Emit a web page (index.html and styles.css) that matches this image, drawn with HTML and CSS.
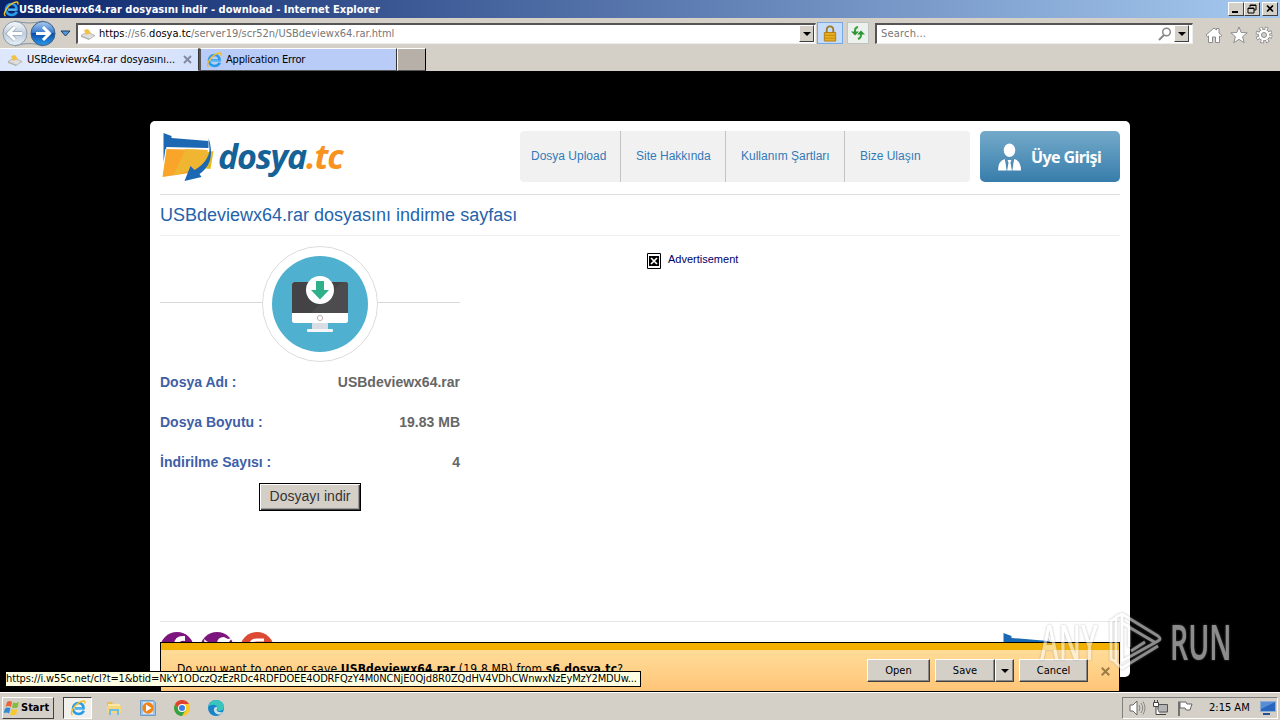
FILE: index.html
```html
<!DOCTYPE html>
<html lang="tr">
<head>
    <meta charset="UTF-8">
    <meta name="viewport" content="width=device-width, initial-scale=1.0">
    <title>USBdeviewx64.rar dosyasını indir - download</title>
    <link rel="stylesheet" href="styles.css">
</head>
<body>
    <!-- shared icons -->
    <svg class="defs" width="0" height="0">
        <symbol id="ie" viewBox="0 0 16 16">
            <path d="M13.800 10.800C12.800 13 10.800 14 8.500 14 5.200 14 3 11.700 3 8.500S5.300 3 8.500 3c3.300 0 5.300 2.200 5 5.500H5" fill="none" stroke="#2a9be8" stroke-width="2.600"/>
            <path d="M5 9h8.500" stroke="#7fd0f7" stroke-width="1"/>
            <path d="M2.500 15C-.8 13.500 4 4.500 11 1.600c3.500-1.400 4.500-.4 3.700 2" fill="none" stroke="#f3bd24" stroke-width="1.400"/>
        </symbol>
        <symbol id="drive" viewBox="0 0 16 14">
            <path d="M1 8.500 7 5l8 3.500-6 4z" fill="#dedede" stroke="#a5a5a5" stroke-width=".7"/>
            <path d="m4 3 4-1 3 4-5 2z" fill="#f2c14a"/>
            <path d="m1 8.500 8 3v1.500l-8-3z" fill="#b5b5b5"/>
        </symbol>
        <symbol id="folder" viewBox="0 0 52 50">
            <path d="M2 1l8 3v2l37 3v7l-43 1-2 13z" fill="#1c68b3"/>
            <path d="M5 15l41 1v3H4z" fill="#fff"/>
            <path d="m46 20 6-1-3 18-9-1z" fill="#e5b91e"/>
            <path d="M5 17l41 1c0 10-6 18-18 23L1 45z" fill="#f8a52a"/>
            <path d="M24 17l22 1c0 9-6 17-15 20L12 43z" fill="#f0b632"/>
            <path d="M47 6c5 15 3 28-9 36l2 3-17 4 6-15 4 4c9-5 15-13 15-21z" fill="#1c68b3"/>
        </symbol>
    </svg>

    <div class="titlebar">
        <svg class="titlebar__icon"><use href="#ie"/></svg>
        <span class="titlebar__text">USBdeviewx64.rar dosyasını indir - download - Internet Explorer</span>
        <div class="window-buttons">
            <span><svg viewBox="0 0 14 12"><path d="M3 9h6" stroke="#000" stroke-width="2"/></svg></span>
            <span><svg viewBox="0 0 14 12"><path d="M5 4V2h6v5H9M5 2.500h6M3 5h6v5H3zM3 5.500h6" fill="none" stroke="#000"/></svg></span>
            <span class="window-buttons__close"><svg viewBox="0 0 14 12"><path d="m4 2.500 6 6m0-6-6 6" stroke="#000" stroke-width="1.700"/></svg></span>
        </div>
    </div>

    <div class="toolbar">
        <svg class="toolbar__nav" viewBox="0 0 74 30">
            <defs>
                <linearGradient id="blue" x2="0" y2="1"><stop stop-color="#a9cbef"/><stop offset=".48" stop-color="#3478ca"/><stop offset=".5" stop-color="#0c4eab"/><stop offset="1" stop-color="#2c9ae8"/></linearGradient>
                <linearGradient id="pale" x2="0" y2="1"><stop stop-color="#f9fbfd"/><stop offset=".5" stop-color="#bfcddc"/><stop offset="1" stop-color="#e8f1f8"/></linearGradient>
            </defs>
            <path d="M15 3q14 4 28 0M15 28q14-5 28 0" fill="none" stroke="#8593a5"/>
            <circle cx="15" cy="15.500" r="12" fill="url(#pale)" stroke="#8a9aae"/>
            <circle cx="43" cy="15.500" r="12" fill="url(#blue)" stroke="#415f86"/>
            <path d="m15 9-6.500 6.500L15 22M9 15.500h13" fill="none" stroke="#9aaabd" stroke-width="4.500"/>
            <path d="m15 9-6.500 6.500L15 22M9 15.500h13" fill="none" stroke="#fff" stroke-width="3"/>
            <path d="m43 9 6.500 6.500L43 22M49 15.500H36" fill="none" stroke="#fff" stroke-width="3"/>
            <path d="M61 13h9l-4.500 5z" fill="#4c9bdc" stroke="#203c60"/>
        </svg>
        <div class="field field--address">
            <svg class="field__icon"><use href="#drive"/></svg>
            <span class="field__text"><b>https</b>://s6.<b>dosya.tc</b>/server19/scr52n/USBdeviewx64.rar.html</span>
            <span class="drop"></span>
        </div>
        <span class="tool tool--lock"><svg viewBox="0 0 16 18"><path d="M4.500 9V5.500q0-4 3.500-4t3.500 4V9" fill="none" stroke="#a17a28" stroke-width="2"/><path d="M2 8h12v9H2z" fill="#e8ae20" stroke="#b37b0a"/><path d="M2 11h12M2 14h12" stroke="#c58a0d"/></svg></span>
        <span class="tool tool--refresh"><svg viewBox="0 0 16 16"><path d="M8 1.500Q5 2 5 5v2M8 13.500q3-1 3-4V8" fill="none" stroke="#36a13b" stroke-width="2"/><path d="M1 6h8L5 10zM7 9h8l-4-4z" fill="#2d9634"/></svg></span>
        <div class="field field--search">
            <span class="field__text">Search...</span>
            <svg class="field__glass" viewBox="0 0 14 14"><circle cx="8.500" cy="5" r="3.800" fill="none" stroke="#888" stroke-width="1.500"/><path d="m6 8-5 5" stroke="#888" stroke-width="2"/></svg>
            <span class="drop"></span>
        </div>
        <div class="toolbar__tools">
            <svg viewBox="0 0 18 18"><path d="m1 9 8-7 2.500 2V2.500h2.500V7l3 2.500-1.500 1L14.500 10v6.500h-4V11h-3v5.500h-4V10l-1 .8z" fill="#fff" stroke="#8d8d8d"/></svg>
            <svg viewBox="0 0 18 18"><path d="m9 1 2.200 5.500 6 .3-4.600 3.900 1.600 6L9 13.400l-5.200 3.300 1.600-6L.8 6.800l6-.3z" fill="#fff" stroke="#8d8d8d"/></svg>
            <svg viewBox="0 0 18 18"><circle cx="9" cy="9" r="6.500" fill="none" stroke="#8d8d8d" stroke-width="4" stroke-dasharray="3.100 2.005"/><circle cx="9" cy="9" r="5.800" fill="#fff" stroke="#8d8d8d"/><circle cx="9" cy="9" r="6.500" fill="none" stroke="#fff" stroke-width="2.500" stroke-dasharray="1.700 3.405" stroke-dashoffset="-.7"/><circle cx="9" cy="9" r="2.500" fill="#d4d0c8" stroke="#8d8d8d"/></svg>
        </div>
    </div>

    <div class="tabs">
        <div class="tab tab--active">
            <svg class="tab__drive"><use href="#drive"/></svg>
            <span class="tab__text">USBdeviewx64.rar dosyasını...</span>
            <svg class="tab__close" viewBox="0 0 9 9"><path d="m1 1 7 7m0-7-7 7" stroke="#858ba3" stroke-width="2"/></svg>
        </div>
        <div class="tab">
            <svg class="tab__ie"><use href="#ie"/></svg>
            <span class="tab__text tab__text--error">Application Error</span>
        </div>
        <div class="tab tab--new"></div>
    </div>

    <div class="viewport">
        <div class="page">
            <div class="header">
                <div class="logo">
                    <svg class="logo__folder"><use href="#folder"/></svg>
                    <span class="logo__text">dosya<em>.tc</em></span>
                </div>
                <div class="menu">
                    <a class="menu__upload">Dosya Upload</a>
                    <a class="menu__about">Site Hakkında</a>
                    <a class="menu__terms">Kullanım Şartları</a>
                    <a class="menu__contact">Bize Ulaşın</a>
                </div>
                <div class="login">
                    <svg class="login__icon" viewBox="0 0 24 28"><ellipse cx="12" cy="7" rx="6" ry="7" fill="#fff"/><path d="M7 16q-7 2-7 12h9l-1-7zM17 16q7 2 7 12h-9l1-7zM10 17h4l-1 3 1.500 8h-5L11 20z" fill="#fff"/></svg>
                    <span class="login__text">Üye Girişi</span>
                </div>
            </div>
            <h1>USBdeviewx64.rar dosyasını indirme sayfası</h1>
            <div class="content">
                <div class="file">
                    <div class="file__badge">
                        <svg viewBox="0 0 116 116">
                            <circle cx="58" cy="58" r="57.500" fill="#fff" stroke="#dcdcdc"/>
                            <circle cx="58" cy="58" r="48" fill="#4fb0d0"/>
                            <path d="M50 76h16v9H50z" fill="#d9dee2"/>
                            <rect x="45" y="83" width="26" height="3" rx="1" fill="#f4f6f7"/>
                            <rect x="30" y="36" width="56" height="41" rx="2.500" fill="#fff"/>
                            <path d="M30 67V38.500q0-2.500 2.500-2.500h51q2.500 0 2.500 2.500V67z" fill="#434244"/>
                            <path d="M49 67 80 36h3.500q2.500 0 2.500 2.500V67z" fill="#4c4b4d"/>
                            <circle cx="58" cy="72" r="2.600" fill="none" stroke="#c5aeb0"/>
                            <circle cx="58" cy="44" r="14" fill="#fff"/>
                            <path d="M54 35h8v9h5l-9 9.500-9-9.500h5z" fill="#2eb08a"/>
                        </svg>
                    </div>
                    <div class="file__row"><span>Dosya Adı :</span><b>USBdeviewx64.rar</b></div>
                    <div class="file__row"><span>Dosya Boyutu :</span><b>19.83 MB</b></div>
                    <div class="file__row"><span>İndirilme Sayısı :</span><b>4</b></div>
                    <button class="file__download">Dosyayı indir</button>
                </div>
                <div class="ad">
                    <svg class="ad__icon" viewBox="0 0 14 16"><path d="M.5.5h13v15H.5z" fill="#fff" stroke="#000"/><path d="M2 3h10v10H2z"/><path d="m4 5 6 6m0-6-6 6" stroke="#fff" stroke-width="1.700"/></svg>
                    <span>Advertisement</span>
                </div>
            </div>
            <div class="footer">
                <div class="social">
                    <svg viewBox="0 0 34 34"><circle cx="17" cy="17" r="17" fill="#7c167e"/><path d="M14 34V18h-4v-5h4q0-10 11-9v5q-6-1-6 4h5v5h-5v16z" fill="#fff"/></svg>
                    <svg viewBox="0 0 34 34"><circle cx="17" cy="17" r="17" fill="#7c167e"/><path d="M4 7q6 6 13 5 0-7 7-7l4 2 4-1-3 4q0 16-15 17l-8-2q6 0 8-4-6-2-7-5h3Q4 13 4 7z" fill="#fff"/></svg>
                    <svg viewBox="0 0 34 34"><circle cx="17" cy="17" r="17" fill="#dc4934"/><path d="M11 14q-1-6 6-6h7M22 12v9" fill="none" stroke="#fff" stroke-width="3"/></svg>
                </div>
                <svg class="footer__folder"><use href="#folder"/></svg>
            </div>
        </div>

        <div class="notice">
            <div class="notice__text">Do you want to open or save <b>USBdeviewx64.rar</b> (19.8 MB) from <b>s6.dosya.tc</b>?</div>
            <div class="notice__buttons">
                <button class="win-button win-button--open">Open</button>
                <div class="split">
                    <button class="win-button">Save</button>
                    <button class="win-button win-button--arrow"><i class="arrow"></i></button>
                </div>
                <button class="win-button win-button--cancel">Cancel</button>
                <svg class="notice__close" viewBox="0 0 8 8"><path d="m.7.7 6.600 6.600m0-6.600L.7 7.300" stroke="#9b7c45" stroke-width="1.800"/></svg>
            </div>
        </div>
        <div class="status">https://i.w55c.net/cl?t=1&amp;btid=NkY1ODczQzEzRDc4RDFDOEE4ODRFQzY4M0NCNjE0Qjd8R0ZQdHV4VDhCWnwxNzEyMzY2MDUw...</div>
    </div>

    <div class="taskbar">
        <div class="start">
            <svg viewBox="0 0 16 16"><path d="M3 2q3-2 5 0L7 7Q4 5 1.500 7z" fill="#ee6539"/><path d="M9 2.500q3 1 6-.5l-1.500 5.500q-3 1.200-5.500 0z" fill="#83bd3c"/><path d="M1 8.500q3-2 5.500 0L5 13.500q-3-2-5.500 0z" fill="#318bd1"/><path d="M7.500 9q3 1.500 6 0L12 14.500q-3 1.500-6 0z" fill="#f8c72e"/></svg>
            <b>Start</b>
        </div>
        <div class="task task--active"><svg viewBox="0 0 16 16"><use href="#ie"/></svg></div>
        <div class="task"><svg viewBox="0 0 16 16"><path d="M1 3q0-1 1-1h4l1 2h7v9H1z" fill="#e7bd55"/><path d="M2 4h12v4H2z" fill="#f9e8a3"/><path d="M1 6h14v7H1z" fill="#f5d879"/><path d="M3 9h10v6h-2v-4H5v4H3z" fill="#70bde8"/></svg></div>
        <div class="task"><svg viewBox="0 0 16 16"><path d="M.5.5h13l2 2v13H.5z" fill="#9dc5e9" stroke="#6e9bc5"/><path d="M3 2h10v12H3z" fill="#d6e9f8"/><circle cx="8" cy="8" r="5.700" fill="#f38516"/><path d="m6 4.500 5.500 3.500L6 11.500z" fill="#fff"/></svg></div>
        <div class="task"><svg viewBox="0 0 16 16"><circle cx="8" cy="8" r="8" fill="#f9c925"/><path d="M8 8V4h7A8 8 0 0 0 1.100 4l3.500 6z" fill="#df4234"/><path d="m8 8-3.500 2L1.100 4A8 8 0 0 0 8 16l3.500-6z" fill="#34a24d"/><circle cx="8" cy="8" r="4" fill="#fff"/><circle cx="8" cy="8" r="3" fill="#3b7de3"/></svg></div>
        <div class="task"><svg viewBox="0 0 16 16"><circle cx="8" cy="8" r="8" fill="#1683cb"/><path d="M.2 7C1 2 4 0 8 0c5 0 8 3 8 6.500 0 3-2 4.500-4.500 4.500-3 0-2-1.500-2-3C9.500 5 4 3 .2 7z" fill="#39c5bd"/><path d="M9.500 8c-2 2-.5 5 5.500 4l-2.500 2.500C8 15 5.500 12 6 9c0-2 3-3 3.500-1z" fill="#c9e1df"/></svg></div>
        <div class="tray">
            <svg viewBox="0 0 18 16"><path d="M2 5h3l4-4v14l-4-4H2z" fill="#fff" stroke="#666"/><path d="M11 5q2 3 0 6M13 3q3.500 5 0 10M15 1.500q4 6.500 0 13" fill="none" stroke="#888"/></svg>
            <svg viewBox="0 0 18 16"><path d="M6 4.500h9.500v7.500H6z" fill="#b4b4b4" stroke="#555"/><path d="M8 14.500h6M1.500 2.500h5v4h-5zM2.500 0v3m3-3v3M4 7v7.500h4" fill="#fff" stroke="#444"/></svg>
            <svg viewBox="0 0 18 16"><path d="M3 1.500V16" stroke="#555" stroke-width="1.500"/><path d="M4 2h6l1 2h5l-2 6h-4L9 8H4z" fill="#fff" stroke="#666"/></svg>
            <span class="tray__clock">2:15 AM</span>
            <svg class="tray__desktop" viewBox="0 0 16 14"><path d="M.5.5h15v10H.5z" fill="#2867bd" stroke="#8dadd1"/><path d="M1 1h14L1 8z" fill="#598ed6"/><path d="M3 12h7v2H3z" fill="#235195"/></svg>
        </div>
    </div>

    <div class="watermark">
        <span>ANY</span>
        <svg viewBox="0 0 56 64"><path d="M21 38V17l-7-3v38l36-20q4-2 0-5L14 5v9l34 20M14 5 8 8v46l6 5 36-22M8 9l-5 3v38l5 3M23 42l14-9" fill="none" stroke="#fff" stroke-width="2.800" stroke-linejoin="round"/></svg>
        <span>RUN</span>
    </div>
</body>
</html>
```
FILE: styles.css
```css
* {
    box-sizing: border-box;
}

body {
    display: flex;
    flex-direction: column;
    width: 1280px;
    height: 720px;
    margin: 0;
    overflow: hidden;
    position: relative;
    background-color: #d4d0c8;
    font-family: 'DejaVu Sans Condensed', 'DejaVu Sans', sans-serif;
    font-size: 11px;
    color: #000;
}

svg {
    display: block;
    flex: none;
}

.defs {
    position: absolute;
}

/* browser window */
.titlebar {
    display: flex;
    align-items: center;
    height: 18px;
    padding: 0 2px 0 3px;
    background: linear-gradient(to right, #0a246a, #a6caf0);
    color: #fff;
    font-weight: bold;
}

.titlebar__icon {
    width: 16px;
    height: 16px;
}

.titlebar__text {
    flex: 1;
    letter-spacing: .02px;
    white-space: nowrap;
}

.window-buttons {
    display: flex;
}

.window-buttons span {
    width: 16px;
    height: 14px;
    background-color: #d4d0c8;
    border: 1px solid;
    border-color: #fff #404040 #404040 #fff;
}

.window-buttons__close {
    margin-left: 2px;
}

.toolbar {
    display: flex;
    align-items: center;
    height: 30px;
    background-color: #d4d0c8;
}

.toolbar__nav {
    width: 74px;
    height: 30px;
    margin-right: 2px;
}

.field {
    display: flex;
    align-items: center;
    height: 21px;
    padding: 1px;
    background-color: #fff;
    border: 1px solid;
    border-width: 2px 1px 1px 2px;
    border-color: #555 #eee #eee #555;
    color: #777;
}

.field b {
    font-weight: normal;
    color: #000;
}

.field--address {
    width: 740px;
}

.field--search {
    width: 318px;
    margin-left: 6px;
    padding-right: 3px;
}

.field__icon {
    width: 16px;
    height: 14px;
    margin: 0 3px 0 1px;
}

.field__text {
    flex: 1;
    white-space: nowrap;
}

.field--search .field__text {
    padding-left: 3px;
    letter-spacing: .2px;
}

.field__glass {
    width: 14px;
    height: 14px;
    margin-right: 2px;
}

.drop {
    display: flex;
    align-items: center;
    justify-content: center;
    width: 15px;
    height: 17px;
    background-color: #d4d0c8;
    border: 1px solid;
    border-color: #fff #404040 #404040 #fff;
}

.drop::after,
.arrow {
    content: '';
    border: 4px solid transparent;
    border-top-color: #000;
    border-bottom: 0;
}

.tool {
    display: flex;
    align-items: center;
    justify-content: center;
    height: 22px;
}

.tool svg {
    width: 16px;
    height: 17px;
}

.tool--lock {
    width: 26px;
    margin-left: 1px;
    background-color: #c5dcfa;
    border: 1px solid #79a9e5;
}

.tool--refresh {
    width: 22px;
    margin-left: 4px;
    background-color: #edf1ed;
    border: 1px solid #bec4bf;
}

.toolbar__tools {
    display: flex;
    gap: 7px;
    margin: 4px 0 0 12px;
}

.toolbar__tools svg {
    width: 18px;
    height: 18px;
}

.tabs {
    display: flex;
    height: 23px;
    background-color: #d4d0c8;
}

.tab {
    display: flex;
    align-items: center;
    width: 198px;
    padding: 0 6px;
    background-color: #b8ccf7;
    border: 1px solid;
    border-color: #fff #333 #555 #555;
    border-left-width: 2px;
}

.tab--active {
    width: 199px;
    padding-left: 7px;
    background: linear-gradient(to right, #dce7fc, #e9effc 40%, #d3e0fb);
    border-left: 0;
    border-bottom-color: #d3e0fb;
}

.tab--new {
    width: 29px;
    background-color: #b7b0a8;
    border-left: 1px solid #fff;
    border-right-color: #000;
}

.tab__drive {
    width: 16px;
    height: 14px;
    margin-right: 4px;
}

.tab__ie {
    width: 16px;
    height: 16px;
    margin: 0 4px 0 -1px;
}

.tab__text {
    flex: 1;
    letter-spacing: -.07px;
    white-space: nowrap;
}

.tab__text--error {
    letter-spacing: -.2px;
}

.tab__close {
    width: 9px;
    height: 9px;
}

/* web page */
.viewport {
    position: relative;
    height: 621px;
    padding: 50px 150px 0;
    background-color: #000;
    font-family: 'Liberation Sans', Arial, sans-serif;
}

.page {
    display: flex;
    flex-direction: column;
    height: 556px;
    padding: 10px 10px 0;
    background-color: #fff;
    border-radius: 5px;
    overflow: hidden;
}

.header {
    display: flex;
    flex: none;
    height: 64px;
    border-bottom: 1px solid #ddd;
}

.logo {
    display: flex;
    width: 360px;
}

.logo__folder {
    width: 53px;
    height: 50px;
    margin: 1px 4px 0 1px;
}

.logo__text {
    font: italic bold 34px/50px 'Open Sans', sans-serif;
    letter-spacing: -1.2px;
    color: #156297;
}

.logo__text em {
    color: #f7931e;
}

.menu {
    display: flex;
    width: 450px;
    height: 51px;
    background-color: #f1f1f1;
    border-radius: 4px;
    font-size: 12px;
    line-height: 50px;
    color: #337ab7;
}

.menu a {
    white-space: nowrap;
}

.menu__upload {
    width: 101px;
    padding-left: 11px;
    border-right: 1px solid #c4c4c4;
}

.menu__about {
    width: 105px;
    padding-left: 15px;
    border-right: 1px solid #c4c4c4;
}

.menu__terms {
    width: 119px;
    padding-left: 15px;
    border-right: 1px solid #c4c4c4;
}

.menu__contact {
    padding-left: 15px;
}

.login {
    display: flex;
    align-items: center;
    width: 140px;
    height: 51px;
    margin-left: 10px;
    padding-left: 18px;
    background: linear-gradient(#74aaca, #377dab);
    border-radius: 5px;
    color: #fff;
}

.login__icon {
    width: 23px;
    height: 28px;
    margin-right: 10px;
}

.login__text {
    font: bold 16px 'Noto Sans', sans-serif;
    letter-spacing: -.6px;
    white-space: nowrap;
}

h1 {
    flex: none;
    height: 41px;
    margin: 0;
    border-bottom: 1px solid #eee;
    font-size: 18px;
    font-weight: normal;
    line-height: 40px;
    color: #2463ac;
}

.content {
    display: flex;
    flex: none;
    height: 385px;
}

.file {
    display: flex;
    flex-direction: column;
    width: 300px;
    padding-top: 10px;
}

.file__badge {
    display: flex;
    justify-content: center;
    height: 116px;
    background: linear-gradient(#d8d8d8, #d8d8d8) 0 56px / 100% 1px no-repeat;
}

.file__badge svg {
    width: 116px;
    height: 116px;
    margin-left: 20px;
}

.file__row {
    display: flex;
    justify-content: space-between;
    height: 40px;
    font-size: 14px;
    font-weight: bold;
    line-height: 40px;
    color: #3e60a7;
}

.file__row b {
    color: #666;
}

.file__download {
    align-self: center;
    width: 102px;
    height: 28px;
    margin-top: 1px;
    padding: 0 0 2px;
    background-color: #d4d0c8;
    border: 1px solid #000;
    box-shadow: inset 1px 1px #fff, inset -1px -1px #404040, inset -2px -2px #999;
    font: 14px 'Liberation Sans', Arial, sans-serif;
    color: #333;
}

.ad {
    display: flex;
    gap: 7px;
    margin: 17px 0 0 187px;
    color: #00006b;
}

.ad__icon {
    width: 14px;
    height: 16px;
}

.footer {
    display: flex;
    flex: none;
    justify-content: space-between;
    padding-top: 10px;
    border-top: 1px solid #e7e7e7;
}

.social {
    display: flex;
    gap: 6px;
}

.social svg {
    width: 34px;
    height: 34px;
}

.footer__folder {
    width: 53px;
    height: 50px;
    margin-right: 66px;
}

/* download bar lies over the page */
.notice {
    display: flex;
    position: absolute;
    left: 160px;
    bottom: 0;
    width: 960px;
    height: 50px;
    padding: 7px 9px 0 16px;
    background: linear-gradient(#ffe09d, #ffc578);
    border: 1px solid #000;
    box-shadow: inset 0 7px #f3b000;
    font-family: 'DejaVu Sans Condensed', 'DejaVu Sans', sans-serif;
}

.notice__text {
    flex: 1;
    font-size: 12px;
    letter-spacing: .16px;
    line-height: 38px;
    white-space: nowrap;
}

.notice__buttons {
    display: flex;
    padding-top: 9px;
}

.win-button {
    width: 60px;
    height: 23px;
    padding: 0;
    background-color: #d4d0c8;
    border: 1px solid;
    border-color: #fff #404040 #404040 #fff;
    box-shadow: inset -1px -1px #888;
    font: 11px 'DejaVu Sans Condensed', 'DejaVu Sans', sans-serif;
    color: #000;
}

.win-button--open {
    width: 63px;
    margin-right: 5px;
}

.split {
    display: flex;
    margin-right: 5px;
}

.win-button--arrow {
    display: flex;
    align-items: center;
    justify-content: center;
    width: 19px;
}

.win-button--cancel {
    width: 69px;
    margin-right: 13px;
}

.notice__close {
    width: 9px;
    height: 9px;
    margin-top: 8px;
}

/* link target shown while hovering */
.status {
    position: absolute;
    left: 5px;
    bottom: 5px;
    width: 636px;
    height: 16px;
    background-color: #ffffe1;
    border: 1px solid #000;
    font-family: 'DejaVu Sans Condensed', 'DejaVu Sans', sans-serif;
    letter-spacing: -.135px;
    line-height: 14px;
    white-space: nowrap;
}

/* taskbar */
.taskbar {
    display: flex;
    align-items: center;
    height: 28px;
    padding: 2px 2px 0;
    border-top: 1px solid #fff;
}

.start {
    display: flex;
    align-items: center;
    gap: 1px;
    width: 52px;
    height: 22px;
    margin-right: 9px;
    padding-left: 1px;
    border: 1px solid;
    border-color: #fff #404040 #404040 #fff;
    font-size: 11px;
}

.start svg {
    width: 16px;
    height: 16px;
}

.task {
    display: flex;
    align-items: center;
    justify-content: center;
    width: 34px;
    height: 22px;
}

.task svg {
    width: 16px;
    height: 16px;
}

.task--active {
    width: 29px;
    margin-right: 5px;
    background-color: #f2f0ed;
    border: 1px solid;
    border-color: #404040 #fff #fff #404040;
}

.tray {
    display: flex;
    align-items: center;
    gap: 6px;
    width: 156px;
    height: 22px;
    margin-left: auto;
    padding-left: 5px;
    border: 1px solid;
    border-color: #808080 #fff #fff #808080;
}

.tray svg {
    width: 18px;
    height: 16px;
}

.tray__clock {
    margin: 0 4px 0 9px;
    white-space: nowrap;
}

.tray .tray__desktop {
    width: 16px;
    height: 14px;
}

.watermark {
    display: flex;
    align-items: center;
    position: absolute;
    left: 1040px;
    top: 608px;
    height: 66px;
    opacity: .55;
    color: #fff;
    font: 600 49px 'Open Sans', sans-serif;
    filter: drop-shadow(0 0 1px #888);
}

.watermark span {
    width: 110px;
    margin-right: -42px;
    transform: scaleX(.58);
    transform-origin: left;
}

.watermark svg {
    width: 56px;
    height: 64px;
    margin-right: 6px;
}
```
